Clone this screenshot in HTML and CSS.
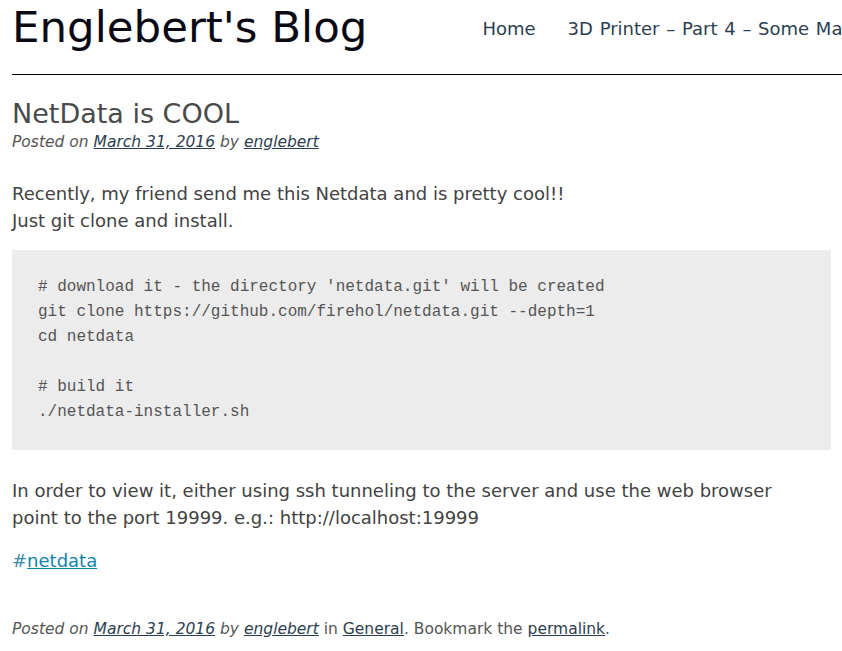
FILE: index.html
```html
<!DOCTYPE html>
<html lang="en">
<head>
<meta charset="utf-8">
<title>Englebert's Blog</title>
<link rel="stylesheet" href="styles.css">
</head>
<body>
<div class="page">
  <header class="site-header">
    <h1 class="site-title">Englebert's Blog</h1>
    <nav class="site-nav">
      <a href="#">Home</a>
      <a href="#">3D Printer – Part 4 – Some Major Upgrades</a>
    </nav>
  </header>
  <article class="post">
    <h2 class="post-title">NetData is COOL</h2>
    <div class="post-meta"><em>Posted on <a href="#">March 31, 2016</a> by <a href="#">englebert</a></em></div>
    <div class="post-content">
      <p>Recently, my friend send me this Netdata and is pretty cool!!<br>Just git clone and install.</p>
      <pre class="code"># download it - the directory 'netdata.git' will be created
git clone https://github.com/firehol/netdata.git --depth=1
cd netdata

# build it
./netdata-installer.sh</pre>
      <p>In order to view it, either using ssh tunneling to the server and use the web browser point to the port 19999. e.g.: http://localhost:19999</p>
      <p class="tags">#<a href="#">netdata</a></p>
    </div>
    <footer class="post-footer"><em>Posted on <a href="#">March 31, 2016</a> by <a href="#">englebert</a></em> in <a href="#">General</a>. Bookmark the <a href="#">permalink</a>.</footer>
  </article>
</div>
</body>
</html>
```
FILE: styles.css
```css
html, body {
  margin: 0;
  padding: 0;
  overflow-x: hidden;
  background: #fff;
}
body {
  font-family: "DejaVu Sans", Verdana, sans-serif;
  color: #424242;
}
.page {
  padding: 0 11px 0 12px;
}
.site-header {
  display: flex;
  align-items: flex-start;
  margin-right: -11px;
  padding-top: 3px;
  height: 71px;
  border-bottom: 1px solid #000;
  white-space: nowrap;
}
.site-title {
  flex-shrink: 0;
  margin: 0;
  font-size: 43.5px;
  font-weight: normal;
  line-height: 49px;
  color: #0a0a14;
}
.site-nav {
  flex-shrink: 0;
  display: flex;
  gap: 32px;
  margin-left: 115px;
  margin-top: 12px;
  font-size: 18px;
  line-height: 27px;
  word-spacing: 1px;
}
.site-nav a {
  color: #2c3e50;
  text-decoration: none;
}
.post-title {
  margin: 23px 0 0;
  font-size: 27px;
  font-weight: normal;
  line-height: 32px;
  color: #4a4a4a;
}
.post-meta {
  font-size: 15.5px;
  line-height: 24px;
  color: #555;
}
.post-meta a, .post-footer a {
  color: #2c3e50;
}
.post-content {
  margin-top: 26px;
  font-size: 18px;
  line-height: 27px;
}
.post-content p {
  margin: 0 30px 16px 0;
}
.code {
  margin: 0 0 27px;
  padding: 25px 26px;
  background: #ececec;
  font-family: "Liberation Mono", "Courier New", monospace;
  font-size: 16px;
  line-height: 25px;
  color: #555;
}
.tags {
  color: #3b8ab0;
}
.tags a {
  color: #0f84ad;
}
.post-footer {
  margin-top: 43px;
  font-size: 15.5px;
  line-height: 24px;
  color: #555;
}
```
